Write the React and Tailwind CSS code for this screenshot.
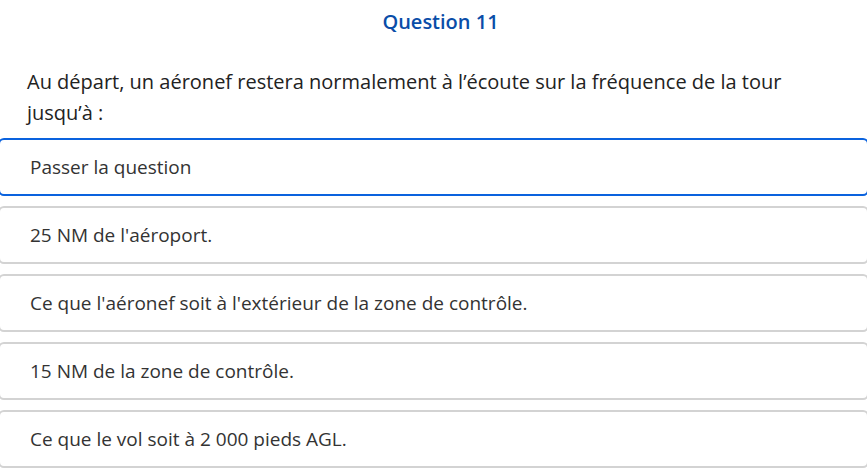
import React from "react";

const options = [
  "Passer la question",
  "25 NM de l'aéroport.",
  "Ce que l'aéronef soit à l'extérieur de la zone de contrôle.",
  "15 NM de la zone de contrôle.",
  "Ce que le vol soit à 2 000 pieds AGL.",
];

const App = () => {
  return (
    <div
      className="w-[867px] h-[469px] overflow-hidden bg-white"
      style={{ fontFamily: '"Open Sans", sans-serif' }}
    >
      <h1 className="pt-[8px] pl-[14px] text-center text-[20px] leading-[28px] font-semibold text-[#0a4da8]">
        Question 11
      </h1>

      <p className="mt-[30px] px-[27px] text-[20px] leading-[31px] text-[#222]">
        Au départ, un aéronef restera normalement à l’écoute sur la fréquence de la tour jusqu’à :
      </p>

      <div className="mt-[10px] -mx-[2px] flex flex-col gap-[10px]">
        {options.map((opt, i) => (
          <div
            key={i}
            className={
              i === 0
                ? "h-[58px] flex items-center rounded-[6px] border-2 border-[#0a62de] pl-[30px] text-[19px] text-[#333]"
                : "h-[58px] flex items-center rounded-[6px] border-2 border-[#d3d3d3] pl-[30px] text-[19px] text-[#333]"
            }
          >
            {opt}
          </div>
        ))}
      </div>
    </div>
  );
};

export default App;
